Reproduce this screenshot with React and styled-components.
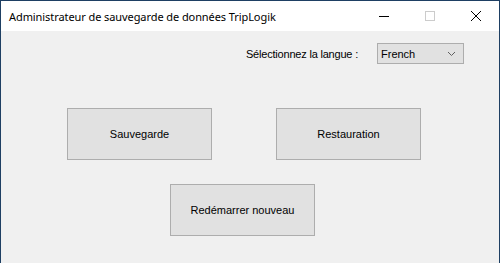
import React, { useState } from 'react';
import styled, { createGlobalStyle } from 'styled-components';

const GlobalStyle = createGlobalStyle`
  html, body {
    margin: 0;
    padding: 0;
    background: #f0f0f0;
  }
  body {
    font-family: 'Liberation Sans', Arial, sans-serif;
  }
`;

const Window = styled.div`
  width: 500px;
  height: 263px;
  box-sizing: border-box;
  border: 1px solid #1e3f63;
  border-bottom: none;
  display: flex;
  flex-direction: column;
  background: #f0f0f0;
`;

const TitleBar = styled.div`
  height: 30px;
  background: #fff;
  display: flex;
  align-items: center;
  padding-left: 8px;
`;

const Title = styled.span`
  flex: 1;
  font-family: 'Noto Sans', 'Open Sans', sans-serif;
  font-size: 11px;
  letter-spacing: -0.08px;
  color: #000;
`;

const Caption = styled.div`
  width: 46px;
  height: 30px;
  display: flex;
  align-items: center;
  justify-content: center;
`;

const Body = styled.div`
  flex: 1;
  display: flex;
  flex-direction: column;
  padding: 12px 35px 0 66px;
`;

const LangRow = styled.div`
  display: flex;
  justify-content: flex-end;
  align-items: center;
  gap: 19px;
`;

const Label = styled.span`
  font-size: 11px;
  letter-spacing: -0.2px;
  color: #000;
`;

const Select = styled.div`
  height: 19px;
  width: 74px;
  border: 1px solid #adadad;
  background: #e1e1e1;
  display: flex;
  align-items: center;
  justify-content: space-between;
  padding: 0 8px 0 3px;
  font-size: 11px;
  color: #000;
`;

const Grid = styled.div`
  margin-top: 44px;
  display: flex;
  flex-direction: column;
  align-items: center;
  align-self: flex-start;
  gap: 24px;
`;

const Row = styled.div`
  display: flex;
  gap: 64px;
`;

const Button = styled.button`
  width: 145px;
  height: 52px;
  box-sizing: border-box;
  border: 1px solid #adadad;
  background: #e1e1e1;
  font-family: 'Liberation Sans', Arial, sans-serif;
  font-size: 11px;
  color: #000;
  padding: 0;
  margin-left: ${p => p.shift || 0}px;
`;

const App = () => {
  const [lang] = useState('French');
  return (
    <>
      <GlobalStyle />
      <Window>
        <TitleBar>
          <Title>Administrateur de sauvegarde de données TripLogik</Title>
          <Caption>
            <svg width="10" height="10" viewBox="0 0 10 10">
              <path d="M0 5.5h10" stroke="#000" strokeWidth="1" />
            </svg>
          </Caption>
          <Caption>
            <svg width="10" height="10" viewBox="0 0 10 10">
              <rect x="0.5" y="0.5" width="9" height="9" fill="none" stroke="#cccccc" />
            </svg>
          </Caption>
          <Caption>
            <svg width="10" height="10" viewBox="0 0 10 10">
              <path d="M0 0L10 10M10 0L0 10" stroke="#000" strokeWidth="1" />
            </svg>
          </Caption>
        </TitleBar>
        <Body>
          <LangRow>
            <Label>Sélectionnez la langue :</Label>
            <Select>
              <span>{lang}</span>
              <svg width="7" height="4" viewBox="0 0 7 4">
                <path d="M0 0L3.5 3.5L7 0" fill="none" stroke="#606060" strokeWidth="1" />
              </svg>
            </Select>
          </LangRow>
          <Grid>
            <Row>
              <Button>Sauvegarde</Button>
              <Button>Restauration</Button>
            </Row>
            <Row>
              <Button shift={-3}>Redémarrer nouveau</Button>
            </Row>
          </Grid>
        </Body>
      </Window>
    </>
  );
};

export default App;
